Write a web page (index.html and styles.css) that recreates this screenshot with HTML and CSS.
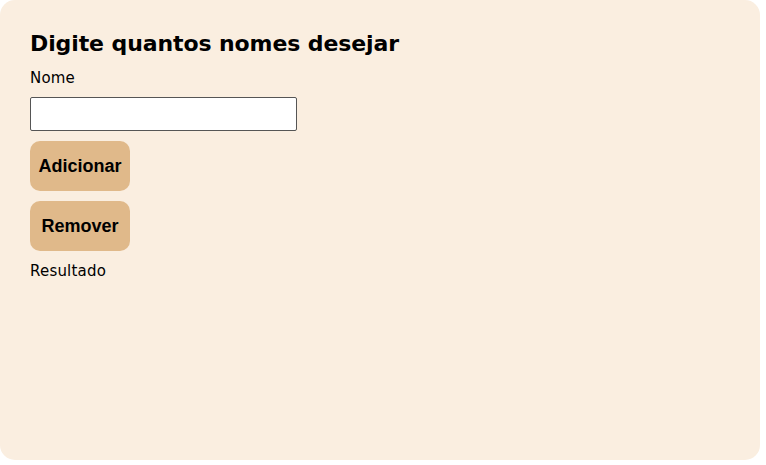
FILE: index.html
```html
<!DOCTYPE html>
<html lang="pt">
<head>
<meta charset="utf-8">
<title>Nomes</title>
<link rel="stylesheet" href="styles.css">
</head>
<body>
<main class="card">
  <h2 class="title">Digite quantos nomes desejar</h2>
  <label class="label" for="nome">Nome</label>
  <input class="field" id="nome" type="text">
  <button class="btn" type="button">Adicionar</button>
  <button class="btn" type="button">Remover</button>
  <p class="result">Resultado</p>
</main>
</body>
</html>
```
FILE: styles.css
```css
html, body {
  margin: 0;
  padding: 0;
  background: #ffffff;
}
.card {
  box-sizing: border-box;
  width: 760px;
  height: 460px;
  background: #faeee0;
  border-radius: 15px;
  padding: 31px 30px 30px 30px;
  display: flex;
  flex-direction: column;
  align-items: flex-start;
  gap: 10px;
  font-family: "DejaVu Sans", sans-serif;
  color: #000;
}
.title {
  margin: 0 0 3px 0;
  font-size: 22px;
  font-weight: bold;
  letter-spacing: -0.1px;
}
.label {
  font-size: 15px;
  margin: 0;
  letter-spacing: 0.2px;
}
.field {
  box-sizing: border-box;
  width: 267px;
  height: 34px;
  margin: 0;
  border: 1px solid #555;
  border-radius: 2px;
  background: #fff;
  padding: 2px 6px;
}
.btn {
  box-sizing: border-box;
  width: 100px;
  height: 50px;
  margin: 0;
  border: none;
  border-radius: 10px;
  background: #e0b98a;
  font-family: "Liberation Sans", Arial, sans-serif;
  font-weight: bold;
  font-size: 18px;
  color: #000;
  padding: 0;
}
.result {
  margin: 1px 0 0 0;
  font-size: 15px;
  letter-spacing: 0.2px;
}
```
